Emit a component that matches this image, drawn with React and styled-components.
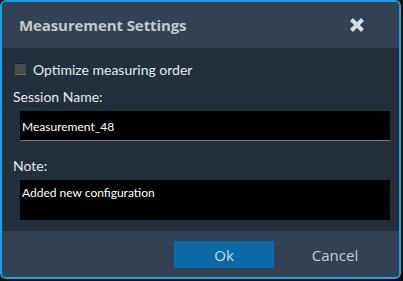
import React from 'react'
import styled, { createGlobalStyle } from 'styled-components'

const GlobalStyle = createGlobalStyle`
  html, body {
    margin: 0;
    padding: 0;
    background: #0c0c0c;
  }
  body {
    font-family: Lato, 'Open Sans', sans-serif;
  }
  * {
    box-sizing: border-box;
  }
`

const Dialog = styled.div`
  width: 401px;
  height: 279px;
  border: 2px solid #1aa2e6;
  border-radius: 6px;
  background: #232f3c;
  display: flex;
  flex-direction: column;
  overflow: hidden;
`

const Header = styled.div`
  height: 46px;
  flex: none;
  background: #324254;
  display: flex;
  align-items: center;
  justify-content: space-between;
  padding: 0 34px 0 17px;
`

const Title = styled.h1`
  margin: 0;
  font-family: 'Open Sans', sans-serif;
  font-size: 15px;
  font-weight: 700;
  color: #c6c9cc;
  letter-spacing: -0.1px;
`

const CloseButton = styled.button`
  border: none;
  background: none;
  padding: 0;
  width: 16px;
  height: 16px;
  display: flex;
  cursor: pointer;
`

const Body = styled.div`
  flex: 1;
  min-height: 0;
  padding: 11px 11px 0 11px;
  display: flex;
  flex-direction: column;
`

const CheckRow = styled.label`
  display: flex;
  align-items: center;
  gap: 7px;
  height: 20px;
  color: #e8eaec;
  font-size: 14px;
`

const Box = styled.span`
  width: 11px;
  height: 12px;
  margin-left: 2px;
  background: #4a4a4a;
  border-top: 1px solid #1e1e1e;
  border-bottom: 1px solid #6a6a6a;
`

const FieldLabel = styled.div`
  margin-top: ${p => p.gap}px;
  color: #e8eaec;
  font-size: 14px;
  line-height: 18px;
`

const Field = styled.div`
  flex: none;
  margin: ${p => p.top}px 0 0 7px;
  width: 370px;
  height: ${p => p.h}px;
  background: #000;
  border-bottom: ${p => (p.line ? '1px solid #7a7a7a' : 'none')};
  color: #fff;
  font-size: 12px;
  padding: ${p => p.pad};
`

const Footer = styled.div`
  height: 46px;
  flex: none;
  background: #324254;
  display: flex;
  align-items: flex-start;
  padding: 10px 0 0 172px;
`

const OkButton = styled.button`
  width: 100px;
  height: 27px;
  border: none;
  background: #0c69a6;
  color: #c9d9e8;
  font-family: 'Open Sans', sans-serif;
  font-size: 15px;
`

const CancelButton = styled.button`
  width: 110px;
  height: 27px;
  border: none;
  background: none;
  color: #c6cdd4;
  font-family: 'Open Sans', sans-serif;
  font-size: 15px;
  padding-left: 18px;
`

export default function App() {
  return (
    <>
      <GlobalStyle />
      <Dialog>
        <Header>
          <Title>Measurement Settings</Title>
          <CloseButton aria-label="Close">
            <svg width="16" height="16" viewBox="0 0 16 16">
              <path d="M2.5 2.5 L13.5 13.5 M13.5 2.5 L2.5 13.5" stroke="#d9dcdf" strokeWidth="4" strokeLinecap="butt" />
            </svg>
          </CloseButton>
        </Header>
        <Body>
          <CheckRow>
            <Box />
            Optimize measuring order
          </CheckRow>
          <FieldLabel gap={9}>Session Name:</FieldLabel>
          <Field top={5} h={30} line pad="8px 2px">Measurement_48</Field>
          <FieldLabel gap={16}>Note:</FieldLabel>
          <Field top={5} h={40} pad="5px 2px">Added new configuration</Field>
        </Body>
        <Footer>
          <OkButton>Ok</OkButton>
          <CancelButton>Cancel</CancelButton>
        </Footer>
      </Dialog>
    </>
  )
}
